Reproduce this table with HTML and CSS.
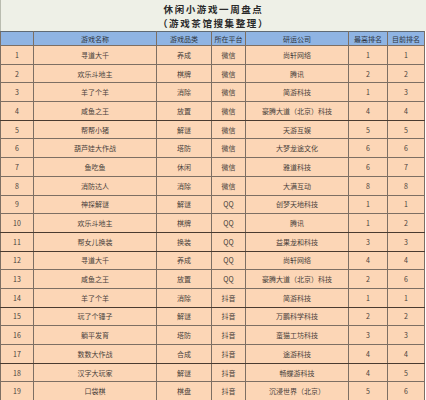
FILE: index.html
```html
<!DOCTYPE html>
<html lang="zh">
<head>
<meta charset="utf-8">
<link rel="stylesheet" href="styles.css">
</head>
<body>
<div class="sheet">
  <div class="title">
    <div class="line">休闲小游戏一周盘点</div>
    <div class="line">（游戏茶馆搜集整理）</div>
  </div>
  <table class="grid">
    <colgroup>
      <col class="c-no"><col class="c-name"><col class="c-cat"><col class="c-plat"><col class="c-co"><col class="c-best"><col class="c-now">
    </colgroup>
    <thead>
      <tr><th></th><th>游戏名称</th><th>游戏品类</th><th>所在平台</th><th>研运公司</th><th>最高排名</th><th>目前排名</th></tr>
    </thead>
    <tbody>
      <tr><td>1</td><td>寻道大千</td><td>养成</td><td>微信</td><td>尚轩网络</td><td>1</td><td>1</td></tr>
      <tr><td>2</td><td>欢乐斗地主</td><td>棋牌</td><td>微信</td><td>腾讯</td><td>2</td><td>2</td></tr>
      <tr><td>3</td><td>羊了个羊</td><td>消除</td><td>微信</td><td>简游科技</td><td>1</td><td>3</td></tr>
      <tr class="dark"><td>4</td><td>咸鱼之王</td><td>放置</td><td>微信</td><td>豪腾大道（北京）科技</td><td>4</td><td>4</td></tr>
      <tr><td>5</td><td>帮帮小猪</td><td>解谜</td><td>微信</td><td>天游互娱</td><td>5</td><td>5</td></tr>
      <tr><td>6</td><td>葫芦娃大作战</td><td>塔防</td><td>微信</td><td>大梦龙途文化</td><td>6</td><td>6</td></tr>
      <tr><td>7</td><td>鱼吃鱼</td><td>休闲</td><td>微信</td><td>雅道科技</td><td>6</td><td>7</td></tr>
      <tr><td>8</td><td>消防达人</td><td>消除</td><td>微信</td><td>大满互动</td><td>8</td><td>8</td></tr>
      <tr><td>9</td><td>神探解谜</td><td>解谜</td><td>QQ</td><td>创梦天地科技</td><td>1</td><td>1</td></tr>
      <tr class="dark"><td>10</td><td>欢乐斗地主</td><td>棋牌</td><td>QQ</td><td>腾讯</td><td>1</td><td>2</td></tr>
      <tr class="dark"><td>11</td><td>帮女儿换装</td><td>换装</td><td>QQ</td><td>益果龙和科技</td><td>3</td><td>3</td></tr>
      <tr><td>12</td><td>寻道大千</td><td>养成</td><td>QQ</td><td>尚轩网络</td><td>4</td><td>4</td></tr>
      <tr><td>13</td><td>咸鱼之王</td><td>放置</td><td>QQ</td><td>豪腾大道（北京）科技</td><td>2</td><td>6</td></tr>
      <tr class="dark"><td>14</td><td>羊了个羊</td><td>消除</td><td>抖音</td><td>简游科技</td><td>1</td><td>1</td></tr>
      <tr><td>15</td><td>玩了个锤子</td><td>解谜</td><td>抖音</td><td>万鹏科学科技</td><td>2</td><td>2</td></tr>
      <tr><td>16</td><td>躺平发育</td><td>塔防</td><td>抖音</td><td>蛮猫工坊科技</td><td>3</td><td>3</td></tr>
      <tr class="dark"><td>17</td><td>数数大作战</td><td>合成</td><td>抖音</td><td>途游科技</td><td>4</td><td>4</td></tr>
      <tr><td>18</td><td>汉字大玩家</td><td>解谜</td><td>抖音</td><td>畅蝶游科技</td><td>4</td><td>5</td></tr>
      <tr><td>19</td><td>口袋棋</td><td>棋盘</td><td>抖音</td><td>沉浸世界（北京）</td><td>5</td><td>6</td></tr>
    </tbody>
  </table>
</div>
</body>
</html>
```

FILE: styles.css
```css
html, body {
  margin: 0;
  padding: 0;
  background: #ffffff;
}
.sheet {
  width: 426px;
  height: 400px;
  overflow: hidden;
  font-family: "Noto Sans CJK SC", "Liberation Sans", sans-serif;
}
.title {
  height: 31px;
  box-sizing: border-box;
  padding-top: 2px;
  background: #eef0e7;
  border-left: 1px solid #b9bcb0;
  color: #2a2a2a;
  font-size: 9.5px;
  font-weight: bold;
  letter-spacing: 1.6px;
  display: flex;
  flex-direction: column;
  align-items: center;
}
.line {
  line-height: 14px;
  height: 14px;
}
.grid {
  width: 424px;
  border-collapse: collapse;
  table-layout: fixed;
  font-size: 7px;
  color: #4a423c;
}
.c-no { width: 33px; }
.c-name { width: 123px; }
.c-cat { width: 55px; }
.c-plat { width: 34px; }
.c-co { width: 103px; }
.c-best { width: 39px; }
.c-now { width: 37px; }
.grid th, .grid td {
  border: 1px solid #7d6f63;
  padding: 0;
  text-align: center;
  white-space: nowrap;
  overflow: hidden;
}
.grid th {
  height: 13px;
  background: #8fb4e3;
  font-weight: normal;
  color: #2e3440;
  border-top: 1px solid #5f6a75;
}
.grid td {
  height: 17.7px;
  background: #fcd6b6;
}
.grid tr.dark td {
  border-bottom: 1px solid #4a3b30;
}
```
